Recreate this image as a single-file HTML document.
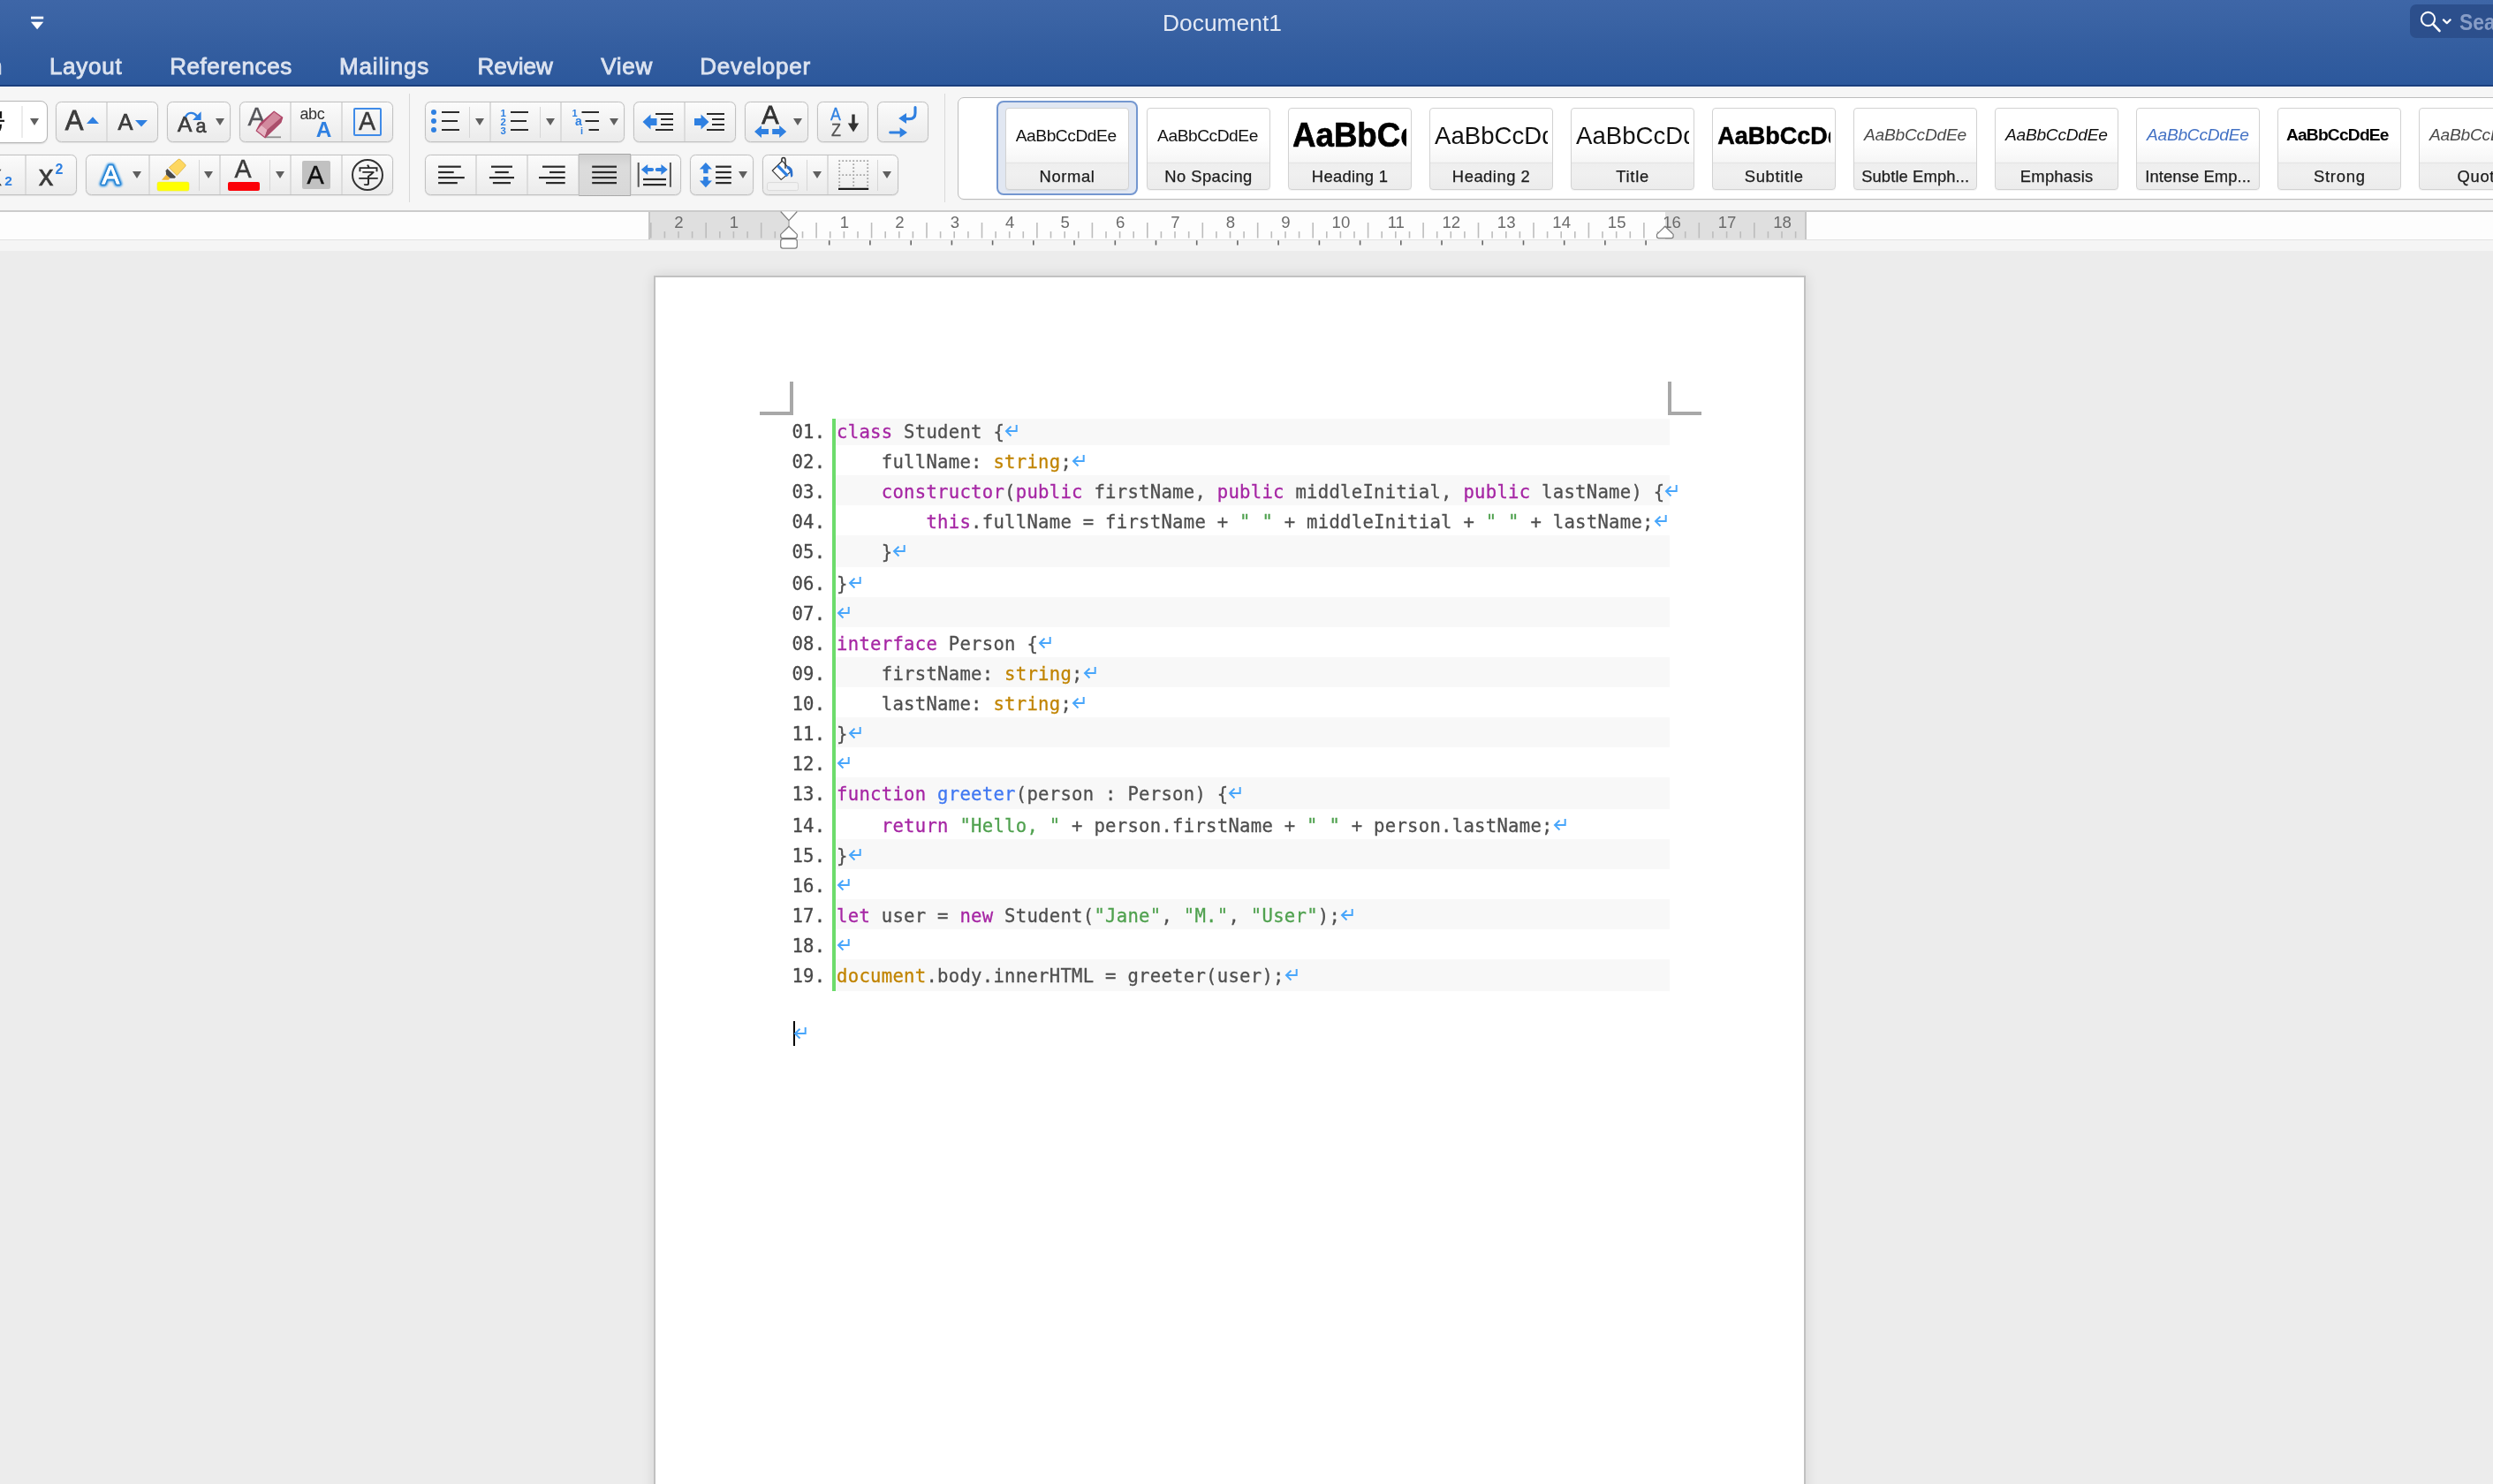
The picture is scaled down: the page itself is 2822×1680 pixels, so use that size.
<!DOCTYPE html>
<html lang="en"><head><meta charset="utf-8"><title>Document1</title>
<style>
*{box-sizing:border-box;margin:0;padding:0}
html,body{width:2822px;height:1680px;overflow:hidden}
body{position:relative;background:#ececec;font-family:"Liberation Sans",sans-serif;color:#222}
#wrap{position:absolute;left:0;top:0;width:2822px;height:1680px;overflow:hidden;will-change:transform}
.abs{position:absolute}
#titlebar{left:0;top:0;width:2822px;height:98px;background:linear-gradient(#3e66a7 0%,#3a63a4 25%,#345ea0 55%,#2c589c 100%);border-bottom:2px solid #1b3f7d}
#ribbon{left:0;top:98px;width:2822px;height:140px;background:#f6f6f6;border-top:1px solid #fff}
#ribline{left:0;top:238px;width:2822px;height:2px;background:#cbcbcb}
#rulerbg{left:0;top:240px;width:2822px;height:31px;background:#fdfdfd}
#rulerline{left:0;top:271px;width:2822px;height:1px;background:#e2e2e2}
#rulerband{left:0;top:272px;width:2822px;height:12px;background:#f5f5f5}
.tab{top:58px;font-size:26px;line-height:34px;color:#dce3f0;white-space:nowrap;-webkit-text-stroke:0.85px #dce3f0}
#doctitle{top:8.7px;left:1316px;width:135px;text-align:center;font-size:26.4px;line-height:34px;color:#e3e9f4;white-space:nowrap}
.grp{position:absolute;height:46px;border:1px solid #c2c2c2;border-radius:6.5px;background:linear-gradient(#fbfbfb,#f3f3f3 50%,#ebebeb);box-shadow:0 0 1px rgba(0,0,0,.22),0 1px 1px rgba(0,0,0,.06)}
.dv{position:absolute;top:0;width:2px;height:44px;background:#dcdcdc;margin-left:-1px}
.sv{position:absolute;top:5px;width:1px;height:35px;background:#d6d6d6}
.vsep{position:absolute;width:1px;background:#d9d9d9;top:106px;height:123px}
.ic{position:absolute;overflow:visible}
.dd{position:absolute;width:0;height:0;border-left:5.5px solid transparent;border-right:5.5px solid transparent;border-top:8px solid #5f5f5f}
</style></head><body>
<div id="wrap">
<div id="titlebar" class="abs"></div>
<svg class="ic" style="left:34px;top:17px" width="16" height="18" viewBox="0 0 16 18"><rect x="1" y="1.7" width="14.2" height="2.8" fill="#fff"/><path d="M1 7.8 H15.2 L8.1 16.2Z" fill="#fff"/></svg>
<div id="doctitle" class="abs">Document1</div>
<div class="abs tab" style="left:-80.0px;letter-spacing:0.300px">Design</div>
<div class="abs tab" style="left:55.9px;letter-spacing:0.747px">Layout</div>
<div class="abs tab" style="left:192.2px;letter-spacing:0.560px">References</div>
<div class="abs tab" style="left:384.1px;letter-spacing:0.818px">Mailings</div>
<div class="abs tab" style="left:540.4px;letter-spacing:0.010px">Review</div>
<div class="abs tab" style="left:680.2px;letter-spacing:0.704px">View</div>
<div class="abs tab" style="left:792.3px;letter-spacing:0.786px">Developer</div>
<div class="abs" style="left:2728px;top:5px;width:110px;height:38px;border-radius:7px;background:#2c4f8c"></div>
<svg class="ic" style="left:2737.4px;top:9.6px" width="44" height="30" viewBox="0 0 44 30"><circle cx="11.5" cy="11.5" r="7.6" fill="none" stroke="#fff" stroke-width="2.1"/><path d="M17 17.2 L24.5 25" stroke="#fff" stroke-width="2.6" stroke-linecap="round"/><path d="M28.9 12.4 L32.8 16.2 L36.7 12.4" fill="none" stroke="#fff" stroke-width="2.2" stroke-linecap="round" stroke-linejoin="round"/></svg>
<div class="abs" style="left:2784.4px;top:9.2px;font-size:26px;line-height:32.5px;font-weight:bold;color:#879dc7;white-space:nowrap;transform:scaleX(.88);transform-origin:0 0">Search</div>
<div id="ribbon" class="abs"></div><div id="ribline" class="abs"></div><div id="rulerbg" class="abs"></div><div id="rulerline" class="abs"></div><div id="rulerband" class="abs"></div>
<div class="abs" style="left:-10px;top:114px;width:64px;height:48px;border:1.6px solid #b6b6b6;border-radius:8px;background:#fff;box-shadow:0 1px 1.5px rgba(0,0,0,.12)"><i class="sv" style="left:32.6px;top:4.5px;width:2px;height:36px;background:#ececec"></i></div>
<i class="dd" style="left:33.5px;top:134.0px"></i>
<div class="abs" style="left:-18.6px;top:122px;font-family:'Liberation Sans','Noto Sans CJK SC',sans-serif;font-size:25px;line-height:32px;color:#111;-webkit-text-stroke:.5px #111;white-space:nowrap">号</div>
<div class="grp" style="left:63.3px;top:115px;width:115.3px;"><i class="dv" style="left:56.7px"></i></div>
<div class="grp" style="left:189.0px;top:115px;width:71.7px;"></div>
<div class="grp" style="left:271.0px;top:115px;width:174.0px;"><i class="dv" style="left:57.0px"></i><i class="dv" style="left:115.0px"></i></div>
<div class="grp" style="left:481.0px;top:115px;width:226.0px;"><i class="dv" style="left:73.0px"></i><i class="dv" style="left:153.0px"></i><i class="sv" style="left:48.6px"></i><i class="sv" style="left:128.5px"></i></div>
<div class="grp" style="left:716.7px;top:115px;width:115.9px;"><i class="dv" style="left:57.1px"></i></div>
<div class="grp" style="left:843.0px;top:115px;width:71.8px;"></div>
<div class="grp" style="left:925.0px;top:115px;width:57.8px;"></div>
<div class="grp" style="left:993.0px;top:115px;width:57.8px;"></div>
<div class="grp" style="left:-10.0px;top:175px;width:96.5px;"><i class="dv" style="left:38.0px"></i></div>
<div class="grp" style="left:97.0px;top:175px;width:348.0px;"><i class="dv" style="left:71.0px"></i><i class="dv" style="left:150.8px"></i><i class="dv" style="left:231.0px"></i><i class="dv" style="left:289.0px"></i><i class="sv" style="left:127.0px"></i><i class="sv" style="left:207.0px"></i></div>
<div class="grp" style="left:481.0px;top:175px;width:290.0px;"><i class="dv" style="left:56.6px"></i><i class="dv" style="left:114.7px"></i><i class="dv" style="left:173.0px"></i><i class="dv" style="left:231.5px"></i></div>
<div class="abs" style="left:655.4px;top:174.4px;width:58.6px;height:47.4px;background:linear-gradient(#d0d0d0,#dcdcdc 30%,#d8d8d8);border:1px solid #b4b4b4;border-top-color:#a6a6a6;border-bottom-color:#a9a9a9;border-left-color:#c4c4c4"></div>
<div class="grp" style="left:781.0px;top:175px;width:71.7px;"></div>
<div class="grp" style="left:862.8px;top:175px;width:154.0px;"><i class="dv" style="left:73.2px"></i><i class="sv" style="left:49.2px"></i><i class="sv" style="left:128.9px"></i></div>
<i class="vsep" style="left:463px"></i><i class="vsep" style="left:1068.5px"></i>
<div class="abs" style="left:73.7px;top:117.8px;font-size:31px;line-height:38.75px;height:38.75px;color:#3c3c3c;white-space:nowrap;-webkit-text-stroke:.8px #3c3c3c">A</div>
<svg class="ic" style="left:97px;top:131px" width="16" height="10"><path d="M1 9 L8 1.2 L15 9Z" fill="#2f80e1"/></svg>
<div class="abs" style="left:133.4px;top:122.6px;font-size:25.4px;line-height:31.75px;height:31.75px;color:#3c3c3c;white-space:nowrap;-webkit-text-stroke:.7px #3c3c3c">A</div>
<svg class="ic" style="left:152px;top:134.5px" width="16" height="10"><path d="M1 1 L15 1 L8 8.6Z" fill="#2f80e1"/></svg>
<div class="abs" style="left:200.9px;top:126.2px;font-size:24.5px;line-height:30.62px;height:30.62px;color:#3c3c3c;white-space:nowrap;-webkit-text-stroke:.7px #3c3c3c">A</div>
<div class="abs" style="left:221.4px;top:129.0px;font-size:21.6px;line-height:27.00px;height:27.00px;color:#3c3c3c;white-space:nowrap;-webkit-text-stroke:.6px #3c3c3c">a</div>
<svg class="ic" style="left:207.2px;top:124px" width="24" height="14" viewBox="0 0 24 14"><path d="M3 8.5 C5.5 2.8 12 2.2 16 7.5" fill="none" stroke="#2f80e1" stroke-width="2.4"/><path d="M11 12 L20.6 12 L20.6 2.2Z" fill="#2f80e1"/></svg>
<i class="dd" style="left:243.5px;top:134.0px"></i>
<div class="abs" style="left:280.4px;top:112.6px;font-size:30px;line-height:37.50px;height:37.50px;color:#55555a;white-space:nowrap;-webkit-text-stroke:.3px #55555a">A</div>
<svg class="ic" style="left:288px;top:124px" width="36" height="34" viewBox="0 0 36 34"><defs><filter id="sb"><feGaussianBlur stdDeviation=".6"/></filter></defs><rect x="12" y="30.4" width="18" height="1.8" fill="#8f8f8f" filter="url(#sb)"/><path d="M22.2 2.2 L31.7 9 L29.9 14.6 L12 31.8 L2.2 24.1 L6.4 16Z" fill="#b0486a" stroke="#b0486a" stroke-width="1.2" stroke-linejoin="round"/><path d="M22.2 3.1 L30.3 9 L14.5 23.05 L7.8 17.8Z" fill="#d28a9e"/><path d="M7.8 17.8 L14.5 23.05 L11.7 30.8 L2.9 23.75Z" fill="#e6b6c3"/><path d="M14.5 23.05 L30.3 9.4 L29.6 14.2 L12 31.1Z" fill="#a9506b"/></svg>
<div class="abs" style="left:339.4px;top:118.2px;font-size:18px;line-height:22.50px;height:22.50px;color:#333;white-space:nowrap;letter-spacing:-0.3px">abc</div>
<div class="abs" style="left:357.8px;top:132.0px;font-size:24.4px;line-height:30.50px;height:30.50px;color:#2f80e1;white-space:nowrap;font-weight:bold">A</div>
<div class="abs" style="left:400px;top:122px;width:32px;height:32px;border:2px solid #3f8be8;border-radius:2px"></div>
<div class="abs" style="left:405.9px;top:120.1px;font-size:28.6px;line-height:35.75px;height:35.75px;color:#3a3a3a;white-space:nowrap;-webkit-text-stroke:.45px #3a3a3a">A</div>
<svg class="ic" style="left:486px;top:120px" width="40" height="36" viewBox="0 0 40 36"><circle cx="5" cy="7" r="3" fill="#2f80e1"/><circle cx="5" cy="17" r="3" fill="#2f80e1"/><circle cx="5" cy="27" r="3" fill="#2f80e1"/><path d="M14 7 h20" stroke="#2b2b2b" stroke-width="2"/><path d="M14 17 h18" stroke="#2b2b2b" stroke-width="2"/><path d="M14 27 h20" stroke="#2b2b2b" stroke-width="2"/></svg>
<i class="dd" style="left:537.5px;top:134.0px"></i>
<i class="dd" style="left:617.5px;top:134.0px"></i>
<i class="dd" style="left:689.5px;top:134.0px"></i>
<svg class="ic" style="left:564px;top:120px" width="40" height="36" viewBox="0 0 40 36"><path d="M14 7 h20" stroke="#2b2b2b" stroke-width="2"/><path d="M14 17 h18" stroke="#2b2b2b" stroke-width="2"/><path d="M14 27 h20" stroke="#2b2b2b" stroke-width="2"/><text x="2.6" y="11.8" font-family="Liberation Sans,sans-serif" font-weight="bold" font-size="11.4" fill="#2f80e1">1</text><text x="2.6" y="21.8" font-family="Liberation Sans,sans-serif" font-weight="bold" font-size="11.4" fill="#2f80e1">2</text><text x="2.6" y="31.8" font-family="Liberation Sans,sans-serif" font-weight="bold" font-size="11.4" fill="#2f80e1">3</text></svg>
<svg class="ic" style="left:644px;top:120px" width="44" height="36" viewBox="0 0 44 36"><text x="3.6" y="11.9" font-family="Liberation Sans,sans-serif" font-weight="bold" font-size="11" fill="#2f80e1">1</text><text x="7" y="22" font-family="Liberation Sans,sans-serif" font-weight="bold" font-size="14" fill="#2f80e1">a</text><text x="13" y="32" font-family="Liberation Sans,sans-serif" font-weight="bold" font-size="11" fill="#2f80e1">i</text><path d="M14.5 7 h19.5 M18.5 17 h15.5 M22.5 27 h11.5" stroke="#2b2b2b" stroke-width="2"/></svg>
<svg class="ic" style="left:726px;top:124px" width="40" height="28" viewBox="0 0 40 28"><path d="M1.5 14 L10.5 5.5 L10.5 10 L17.5 10 L17.5 18 L10.5 18 L10.5 22.5Z" fill="#2f80e1"/><path d="M16 5 h20 M22 11 h14 M22 17 h14 M16 23 h20" stroke="#2b2b2b" stroke-width="2"/></svg>
<svg class="ic" style="left:784px;top:124px" width="40" height="28" viewBox="0 0 40 28"><path d="M18.5 14 L9.5 5.5 L9.5 10 L2 10 L2 18 L9.5 18 L9.5 22.5Z" fill="#2f80e1"/><path d="M16 5 h20 M22 11 h14 M22 17 h14 M16 23 h20" stroke="#2b2b2b" stroke-width="2"/></svg>
<div class="abs" style="left:862.2px;top:112.2px;font-size:29px;line-height:36.25px;height:36.25px;color:#333;white-space:nowrap;-webkit-text-stroke:.8px #333">A</div>
<svg class="ic" style="left:853px;top:141px" width="40" height="16" viewBox="0 0 40 16"><path d="M1 8 L9 1 L9 5 L17 5 L17 11 L9 11 L9 15Z M37.2 8 L29.2 1 L29.2 5 L21.2 5 L21.2 11 L29.2 11 L29.2 15Z" fill="#2f80e1"/></svg>
<i class="dd" style="left:897.5px;top:134.0px"></i>
<div class="abs" style="left:940.0px;top:117.0px;font-size:19.7px;line-height:24.62px;height:24.62px;color:#2f80e1;white-space:nowrap;transform:scaleX(.9);transform-origin:0 0;-webkit-text-stroke:.3px #2f80e1">A</div>
<div class="abs" style="left:940.8px;top:134.9px;font-size:19.5px;line-height:24.38px;height:24.38px;color:#555;white-space:nowrap;transform:scaleX(.92);transform-origin:0 0;-webkit-text-stroke:.3px #555">Z</div>
<svg class="ic" style="left:958px;top:128px" width="16" height="24" viewBox="0 0 16 24"><path d="M8 1.5 V13" stroke="#333" stroke-width="3.4"/><path d="M1.8 11.5 L14.2 11.5 L8 21.5Z" fill="#333"/></svg>
<svg class="ic" style="left:1004px;top:119px" width="36" height="40" viewBox="0 0 36 40"><path d="M32 2.6 V9 Q32 15.6 25.4 15.6 H19" fill="none" stroke="#2f80e1" stroke-width="3.1" stroke-linecap="round"/><path d="M13.2 15 L22 9 L22 21Z" fill="#2f80e1"/><path d="M3.6 31 H16" stroke="#2f80e1" stroke-width="2.8" stroke-linecap="round"/><path d="M23 31 L14.6 25.2 L14.6 36.8Z" fill="#2f80e1"/></svg>
<div class="abs" style="left:-15.0px;top:177.6px;font-size:33.5px;line-height:41.88px;height:41.88px;color:#3a3a3a;white-space:nowrap;-webkit-text-stroke:.5px #3a3a3a">x</div>
<div class="abs" style="left:5.2px;top:194.5px;font-size:15.5px;line-height:19.38px;height:19.38px;color:#2f80e1;white-space:nowrap;font-weight:bold">2</div>
<div class="abs" style="left:43.8px;top:177.6px;font-size:33.5px;line-height:41.88px;height:41.88px;color:#3a3a3a;white-space:nowrap;-webkit-text-stroke:.5px #3a3a3a">x</div>
<div class="abs" style="left:62.6px;top:182.1px;font-size:16px;line-height:20.00px;height:20.00px;color:#2f80e1;white-space:nowrap;font-weight:bold">2</div>
<svg class="ic" style="left:108px;top:180px" width="36" height="36" viewBox="0 0 36 36"><defs><filter id="gl" x="-30%" y="-30%" width="160%" height="160%"><feGaussianBlur stdDeviation="1.1"/></filter></defs><text x="7.4" y="28.3" font-family="Liberation Sans,sans-serif" font-size="29.5" fill="none" stroke="#3a98e6" stroke-width="6.5" stroke-linejoin="round" filter="url(#gl)">A</text><text x="7.4" y="28.3" font-family="Liberation Sans,sans-serif" font-size="29.5" fill="#fff" stroke="#2a86d4" stroke-width="4.4" stroke-linejoin="round" paint-order="stroke">A</text><text x="7.4" y="28.3" font-family="Liberation Sans,sans-serif" font-size="29.5" fill="#fff" stroke="#fff" stroke-width="0.9">A</text></svg>
<i class="dd" style="left:149.5px;top:194.0px"></i>
<svg class="ic" style="left:176px;top:178px" width="40" height="40" viewBox="0 0 40 40"><rect x="2" y="28.1" width="36" height="10" rx="2" fill="#ffff00" stroke="#ecec3a" stroke-width=".6"/><path d="M12.1 19.7 L16.6 23.8 L14.6 25.8 L6.9 25.8Z" fill="#f2b93c"/><path d="M13.4 12.9 L23 22.2 L21.7 23.8 L16.6 23.8 L12.1 19.7 L11.7 15.2Z" fill="#4a4a4a"/><path d="M25.6 2.6 Q26.8 1.6 28 2.7 L33.6 8 Q34.7 9.2 33.7 10.4 L24.3 20.6 L15.3 11.7Z" fill="#fdd761" stroke="#d9a92e" stroke-width=".7"/></svg>
<i class="dd" style="left:231.4px;top:194.0px"></i>
<div class="abs" style="left:265.6px;top:174.0px;font-size:28.6px;line-height:35.75px;height:35.75px;color:#3a3a3a;white-space:nowrap;-webkit-text-stroke:.45px #3a3a3a">A</div>
<div class="abs" style="left:258px;top:206px;width:36px;height:10px;border-radius:2px;background:#fb0007"></div>
<i class="dd" style="left:311.5px;top:194.0px"></i>
<div class="abs" style="left:342px;top:182px;width:32px;height:32px;border-radius:2px;background:#c1c1c1"></div>
<div class="abs" style="left:347.6px;top:179.7px;font-size:28.8px;line-height:36.00px;height:36.00px;color:#111;white-space:nowrap;-webkit-text-stroke:.45px #111">A</div>
<div class="abs" style="left:398px;top:180px;width:36px;height:36px;border-radius:50%;border:2px solid #333"></div>
<div class="abs" style="left:404.5px;top:183px;width:25px;height:32px;font-family:'Liberation Sans','Noto Sans CJK SC',sans-serif;font-size:25px;line-height:32px;color:#2a2a2a;text-align:center">字</div>
<svg class="ic" style="left:0;top:0" width="1100" height="240" viewBox="0 0 1100 240"><path d="M496.1 188.7 H521.8" stroke="#2b2b2b" stroke-width="2.2"/><path d="M496.1 195.0 H513.7" stroke="#2b2b2b" stroke-width="2.2"/><path d="M496.1 201.1 H525.8" stroke="#2b2b2b" stroke-width="2.2"/><path d="M496.1 207.1 H517.8" stroke="#2b2b2b" stroke-width="2.2"/><path d="M556.0 188.7 H580.0" stroke="#2b2b2b" stroke-width="2.2"/><path d="M560.3 195.0 H575.8" stroke="#2b2b2b" stroke-width="2.2"/><path d="M553.9 201.1 H582.0" stroke="#2b2b2b" stroke-width="2.2"/><path d="M557.9 207.1 H578.0" stroke="#2b2b2b" stroke-width="2.2"/><path d="M614.0 188.7 H639.7" stroke="#2b2b2b" stroke-width="2.2"/><path d="M622.0 195.0 H639.7" stroke="#2b2b2b" stroke-width="2.2"/><path d="M610.0 201.1 H639.7" stroke="#2b2b2b" stroke-width="2.2"/><path d="M618.0 207.1 H639.7" stroke="#2b2b2b" stroke-width="2.2"/><path d="M670.2 188.7 H698.0" stroke="#2b2b2b" stroke-width="2.2"/><path d="M670.2 195.0 H698.0" stroke="#2b2b2b" stroke-width="2.2"/><path d="M670.2 201.1 H698.0" stroke="#2b2b2b" stroke-width="2.2"/><path d="M670.2 207.1 H698.0" stroke="#2b2b2b" stroke-width="2.2"/><path d="M722.7 183.9 V211.8 M758.9 183.9 V211.8" stroke="#555" stroke-width="2"/><path d="M728.0 203.0 H754.0" stroke="#2b2b2b" stroke-width="2.2"/><path d="M728.0 209.1 H754.0" stroke="#2b2b2b" stroke-width="2.2"/><path d="M725.8 192 L733.2 186 L733.2 189.9 L738 189.9 A2.1 2.1 0 0 1 738 194.1 L733.2 194.1 L733.2 198Z M755.8 192 L748.4 186 L748.4 189.9 L743.8 189.9 A2.1 2.1 0 0 0 743.8 194.1 L748.4 194.1 L748.4 198Z" fill="#2f80e1"/><path d="M798.9 183.9 L806 191.6 L801.6 191.6 L801.6 196.3 L796.2 196.3 L796.2 191.6 L791.8 191.6Z M798.9 212.3 L806 204.6 L801.6 204.6 L801.6 199.9 L796.2 199.9 L796.2 204.6 L791.8 204.6Z" fill="#2f80e1"/><path d="M810.1 188.7 H827.8" stroke="#2b2b2b" stroke-width="2.2"/><path d="M810.1 195.0 H827.8" stroke="#2b2b2b" stroke-width="2.2"/><path d="M810.1 201.1 H827.8" stroke="#2b2b2b" stroke-width="2.2"/><path d="M810.1 207.1 H827.8" stroke="#2b2b2b" stroke-width="2.2"/><rect x="868.5" y="206.6" width="35" height="9" rx="2" fill="#f1f1f1" stroke="#dadada" stroke-width="1"/><path d="M885.4 182.2 L896 193.6 L884.2 203.4 L874.2 193.2Z" fill="#fff" stroke="#333" stroke-width="1.2" stroke-linejoin="round"/><path d="M881.6 186.4 L892.8 198 L890.4 200.2 L879.2 188.8Z" fill="#2f80e1"/><path d="M890.6 187.6 Q898 188.4 897.4 198.6 Q897 201.2 895.2 200.4 Q894.6 193 890.6 190.6Z" fill="#2a6fcb"/><path d="M889 190.8 V181.2 Q889 178.6 886.9 178.6 Q884.8 178.6 884.8 181.2 V182.6" fill="none" stroke="#333" stroke-width="1.5"/><path d="M949.3 181.2 h1.8v1.8h-1.8zM949.3 197.2 h1.8v1.8h-1.8zM953.3 181.2 h1.8v1.8h-1.8zM953.3 197.2 h1.8v1.8h-1.8zM957.3 181.2 h1.8v1.8h-1.8zM957.3 197.2 h1.8v1.8h-1.8zM961.3 181.2 h1.8v1.8h-1.8zM961.3 197.2 h1.8v1.8h-1.8zM965.3 181.2 h1.8v1.8h-1.8zM965.3 197.2 h1.8v1.8h-1.8zM969.3 181.2 h1.8v1.8h-1.8zM969.3 197.2 h1.8v1.8h-1.8zM973.3 181.2 h1.8v1.8h-1.8zM973.3 197.2 h1.8v1.8h-1.8zM977.3 181.2 h1.8v1.8h-1.8zM977.3 197.2 h1.8v1.8h-1.8zM981.3 181.2 h1.8v1.8h-1.8zM981.3 197.2 h1.8v1.8h-1.8zM949.3 181.2 h1.8v1.8h-1.8zM965.3 181.2 h1.8v1.8h-1.8zM981.3 181.2 h1.8v1.8h-1.8zM949.3 185.2 h1.8v1.8h-1.8zM965.3 185.2 h1.8v1.8h-1.8zM981.3 185.2 h1.8v1.8h-1.8zM949.3 189.2 h1.8v1.8h-1.8zM965.3 189.2 h1.8v1.8h-1.8zM981.3 189.2 h1.8v1.8h-1.8zM949.3 193.2 h1.8v1.8h-1.8zM965.3 193.2 h1.8v1.8h-1.8zM981.3 193.2 h1.8v1.8h-1.8zM949.3 197.2 h1.8v1.8h-1.8zM965.3 197.2 h1.8v1.8h-1.8zM981.3 197.2 h1.8v1.8h-1.8zM949.3 201.2 h1.8v1.8h-1.8zM965.3 201.2 h1.8v1.8h-1.8zM981.3 201.2 h1.8v1.8h-1.8zM949.3 205.2 h1.8v1.8h-1.8zM965.3 205.2 h1.8v1.8h-1.8zM981.3 205.2 h1.8v1.8h-1.8zM949.3 209.2 h1.8v1.8h-1.8zM965.3 209.2 h1.8v1.8h-1.8zM981.3 209.2 h1.8v1.8h-1.8z" fill="#a4a4a4"/><path d="M949 213.9 H983.2" stroke="#1a1a1a" stroke-width="2.3"/></svg>
<i class="dd" style="left:835.5px;top:193.8px"></i>
<i class="dd" style="left:919.8px;top:193.8px"></i>
<i class="dd" style="left:999.2px;top:193.8px"></i>
<style>
.card{position:absolute;top:122px;width:140px;height:93px;border:1px solid #d2d2d2;border-radius:4px;background:linear-gradient(#fff 0,#fff 40%,#f6f6f6 66%,#eeeeee 67%,#f0f0f0 80%,#ececec 100%);overflow:hidden;box-shadow:0 1px 1px rgba(0,0,0,.05)}
.card .pv{position:absolute;left:5px;top:0;width:127.6px;height:61px;white-space:nowrap;overflow:hidden;color:#111}
.card .pv span{position:absolute;display:inline-block;transform-origin:0 0;white-space:nowrap}
.card .lb{position:absolute;left:0;top:64.9px;width:100%;height:24px;line-height:24px;font-size:18.4px;text-align:center;color:#1c1c1c;-webkit-text-stroke:.25px #1c1c1c;white-space:nowrap}
.card .ln{position:absolute;left:0;top:61px;width:100%;height:1px;background:#e4e4e4}
</style>
<div class="abs" style="left:1084px;top:110px;width:1760px;height:116px;border:1px solid #bdbdbd;border-radius:7px;background:#fff;box-shadow:0 1px 0 rgba(0,0,0,.04)"></div>
<div class="abs" style="left:1128.4px;top:114.4px;width:159.5px;height:107px;border:2px solid #7497d0;border-radius:8px;background:#e1e7f2"></div>
<div class="card" style="left:1138.0px"><div class="pv"><span style="left:5.7px;top:18.5px;font-size:19.2px;line-height:24.00px;font-weight:normal;font-style:normal;color:#111;letter-spacing:-0.441px;transform:scaleX(1)">AaBbCcDdEe</span></div><i class="ln"></i><div class="lb" style="letter-spacing:0.600px">Normal</div></div>
<div class="card" style="left:1298.0px"><div class="pv"><span style="left:6.1px;top:18.5px;font-size:19.2px;line-height:24.00px;font-weight:normal;font-style:normal;color:#111;letter-spacing:-0.463px;transform:scaleX(1)">AaBbCcDdEe</span></div><i class="ln"></i><div class="lb" style="letter-spacing:0.452px">No Spacing</div></div>
<div class="card" style="left:1458.1px"><div class="pv"><span style="left:-0.8px;top:7.3px;font-size:38px;line-height:47.50px;font-weight:bold;font-style:normal;color:#000;-webkit-text-stroke:.7px #000;transform:scaleX(0.965)">AaBbCcDd</span></div><i class="ln"></i><div class="lb" style="letter-spacing:0.289px">Heading 1</div></div>
<div class="card" style="left:1618.1px"><div class="pv"><span style="left:-0.1px;top:13.7px;font-size:27.6px;line-height:34.50px;font-weight:normal;font-style:normal;color:#111;transform:scaleX(1)">AaBbCcDd</span></div><i class="ln"></i><div class="lb" style="letter-spacing:0.514px">Heading 2</div></div>
<div class="card" style="left:1778.1px"><div class="pv"><span style="left:-0.1px;top:13.7px;font-size:27.6px;line-height:34.50px;font-weight:normal;font-style:normal;color:#111;transform:scaleX(1)">AaBbCcDd</span></div><i class="ln"></i><div class="lb" style="letter-spacing:0.730px">Title</div></div>
<div class="card" style="left:1938.2px"><div class="pv"><span style="left:0.0px;top:14.9px;font-size:27px;line-height:33.75px;font-weight:bold;font-style:normal;color:#000;-webkit-text-stroke:.5px #000;transform:scaleX(1.0)">AaBbCcDd</span></div><i class="ln"></i><div class="lb" style="letter-spacing:0.718px">Subtitle</div></div>
<div class="card" style="left:2098.2px"><div class="pv"><span style="left:5.7px;top:18.2px;font-size:19.2px;line-height:24.00px;font-weight:normal;font-style:italic;color:#4a4a4a;letter-spacing:-0.219px;transform:scaleX(1)">AaBbCcDdEe</span></div><i class="ln"></i><div class="lb" style="letter-spacing:0.101px">Subtle Emph...</div></div>
<div class="card" style="left:2258.2px"><div class="pv"><span style="left:5.9px;top:18.2px;font-size:19.2px;line-height:24.00px;font-weight:normal;font-style:italic;color:#111;letter-spacing:-0.296px;transform:scaleX(1)">AaBbCcDdEe</span></div><i class="ln"></i><div class="lb" style="letter-spacing:0.244px">Emphasis</div></div>
<div class="card" style="left:2418.2px"><div class="pv"><span style="left:5.8px;top:18.2px;font-size:19.2px;line-height:24.00px;font-weight:normal;font-style:italic;color:#4472c4;letter-spacing:-0.274px;transform:scaleX(1)">AaBbCcDdEe</span></div><i class="ln"></i><div class="lb" style="letter-spacing:0.082px">Intense Emp...</div></div>
<div class="card" style="left:2578.3px"><div class="pv"><span style="left:3.6px;top:18.2px;font-size:19.2px;line-height:24.00px;font-weight:bold;font-style:normal;color:#000;letter-spacing:-0.785px;transform:scaleX(1)">AaBbCcDdEe</span></div><i class="ln"></i><div class="lb" style="letter-spacing:0.757px">Strong</div></div>
<div class="card" style="left:2738.3px"><div class="pv"><span style="left:5.6px;top:18.2px;font-size:19.2px;line-height:24.00px;font-weight:normal;font-style:italic;color:#4a4a4a;letter-spacing:-0.219px;transform:scaleX(1)">AaBbCcDdEe</span></div><i class="ln"></i><div class="lb" style="letter-spacing:0.719px">Quote</div></div>
<div class="abs" style="left:734px;top:240px;width:158.9px;height:31px;background:#dfdfdf;border-left:2px solid #c6c6c6"></div>
<div class="abs" style="left:1884.7px;top:240px;width:160.8px;height:31px;background:#dfdfdf;border-right:2px solid #c6c6c6"></div>
<svg class="ic" style="left:0;top:238px" width="2822" height="48" viewBox="0 238 2822 48"><path d="M736.8 252 V269.6 M752.4 262 V269.6 M768.0 262 V269.6 M783.6 262 V269.6 M799.2 252 V269.6 M814.8 262 V269.6 M830.4 262 V269.6 M846.1 262 V269.6 M861.7 252 V269.6 M877.3 262 V269.6 M892.9 262 V269.6 M908.5 262 V269.6 M924.1 252 V269.6 M939.7 262 V269.6 M955.4 262 V269.6 M971.0 262 V269.6 M986.6 252 V269.6 M1002.2 262 V269.6 M1017.8 262 V269.6 M1033.4 262 V269.6 M1049.0 252 V269.6 M1064.6 262 V269.6 M1080.2 262 V269.6 M1095.9 262 V269.6 M1111.5 252 V269.6 M1127.1 262 V269.6 M1142.7 262 V269.6 M1158.3 262 V269.6 M1173.9 252 V269.6 M1189.5 262 V269.6 M1205.2 262 V269.6 M1220.8 262 V269.6 M1236.4 252 V269.6 M1252.0 262 V269.6 M1267.6 262 V269.6 M1283.2 262 V269.6 M1298.8 252 V269.6 M1314.4 262 V269.6 M1330.0 262 V269.6 M1345.7 262 V269.6 M1361.3 252 V269.6 M1376.9 262 V269.6 M1392.5 262 V269.6 M1408.1 262 V269.6 M1423.7 252 V269.6 M1439.3 262 V269.6 M1455.0 262 V269.6 M1470.6 262 V269.6 M1486.2 252 V269.6 M1501.8 262 V269.6 M1517.4 262 V269.6 M1533.0 262 V269.6 M1548.6 252 V269.6 M1564.2 262 V269.6 M1579.8 262 V269.6 M1595.5 262 V269.6 M1611.1 252 V269.6 M1626.7 262 V269.6 M1642.3 262 V269.6 M1657.9 262 V269.6 M1673.5 252 V269.6 M1689.1 262 V269.6 M1704.8 262 V269.6 M1720.4 262 V269.6 M1736.0 252 V269.6 M1751.6 262 V269.6 M1767.2 262 V269.6 M1782.8 262 V269.6 M1798.4 252 V269.6 M1814.0 262 V269.6 M1829.7 262 V269.6 M1845.3 262 V269.6 M1860.9 252 V269.6 M1876.5 262 V269.6 M1892.1 262 V269.6 M1907.7 262 V269.6 M1923.3 252 V269.6 M1938.9 262 V269.6 M1954.6 262 V269.6 M1970.2 262 V269.6 M1985.8 252 V269.6 M2001.4 262 V269.6 M2017.0 262 V269.6 M2032.6 262 V269.6 " stroke="#bdbdbd" stroke-width="1.6" fill="none"/><path d="M938.7 272.2 V277.6 M984.9 272.2 V277.6 M1031.2 272.2 V277.6 M1077.4 272.2 V277.6 M1123.6 272.2 V277.6 M1169.8 272.2 V277.6 M1216.0 272.2 V277.6 M1262.3 272.2 V277.6 M1308.5 272.2 V277.6 M1354.7 272.2 V277.6 M1400.9 272.2 V277.6 M1447.1 272.2 V277.6 M1493.4 272.2 V277.6 M1539.6 272.2 V277.6 M1585.8 272.2 V277.6 M1632.0 272.2 V277.6 M1678.2 272.2 V277.6 M1724.5 272.2 V277.6 M1770.7 272.2 V277.6 M1816.9 272.2 V277.6 M1863.1 272.2 V277.6 " stroke="#666" stroke-width="1.6" fill="none"/><text x="768.5" y="257.8" text-anchor="middle" font-family="Liberation Sans,sans-serif" font-size="18.6" fill="#6a6a6a">2</text><text x="830.9" y="257.8" text-anchor="middle" font-family="Liberation Sans,sans-serif" font-size="18.6" fill="#6a6a6a">1</text><text x="955.9" y="257.8" text-anchor="middle" font-family="Liberation Sans,sans-serif" font-size="18.6" fill="#6a6a6a">1</text><text x="1018.3" y="257.8" text-anchor="middle" font-family="Liberation Sans,sans-serif" font-size="18.6" fill="#6a6a6a">2</text><text x="1080.8" y="257.8" text-anchor="middle" font-family="Liberation Sans,sans-serif" font-size="18.6" fill="#6a6a6a">3</text><text x="1143.2" y="257.8" text-anchor="middle" font-family="Liberation Sans,sans-serif" font-size="18.6" fill="#6a6a6a">4</text><text x="1205.7" y="257.8" text-anchor="middle" font-family="Liberation Sans,sans-serif" font-size="18.6" fill="#6a6a6a">5</text><text x="1268.1" y="257.8" text-anchor="middle" font-family="Liberation Sans,sans-serif" font-size="18.6" fill="#6a6a6a">6</text><text x="1330.5" y="257.8" text-anchor="middle" font-family="Liberation Sans,sans-serif" font-size="18.6" fill="#6a6a6a">7</text><text x="1393.0" y="257.8" text-anchor="middle" font-family="Liberation Sans,sans-serif" font-size="18.6" fill="#6a6a6a">8</text><text x="1455.5" y="257.8" text-anchor="middle" font-family="Liberation Sans,sans-serif" font-size="18.6" fill="#6a6a6a">9</text><text x="1517.9" y="257.8" text-anchor="middle" font-family="Liberation Sans,sans-serif" font-size="18.6" fill="#6a6a6a">10</text><text x="1580.3" y="257.8" text-anchor="middle" font-family="Liberation Sans,sans-serif" font-size="18.6" fill="#6a6a6a">11</text><text x="1642.8" y="257.8" text-anchor="middle" font-family="Liberation Sans,sans-serif" font-size="18.6" fill="#6a6a6a">12</text><text x="1705.2" y="257.8" text-anchor="middle" font-family="Liberation Sans,sans-serif" font-size="18.6" fill="#6a6a6a">13</text><text x="1767.7" y="257.8" text-anchor="middle" font-family="Liberation Sans,sans-serif" font-size="18.6" fill="#6a6a6a">14</text><text x="1830.2" y="257.8" text-anchor="middle" font-family="Liberation Sans,sans-serif" font-size="18.6" fill="#6a6a6a">15</text><text x="1892.6" y="257.8" text-anchor="middle" font-family="Liberation Sans,sans-serif" font-size="18.6" fill="#6a6a6a">16</text><text x="1955.1" y="257.8" text-anchor="middle" font-family="Liberation Sans,sans-serif" font-size="18.6" fill="#6a6a6a">17</text><text x="2017.5" y="257.8" text-anchor="middle" font-family="Liberation Sans,sans-serif" font-size="18.6" fill="#6a6a6a">18</text><path d="M883.7 239.5 L893 249.6 L902.3 239.5" fill="#fff" stroke="#7d7d7d" stroke-width="1.2"/><path d="M893 250 V256" stroke="#aaa" stroke-width="1.4"/><path d="M893 256.2 L902.3 265.4 V267.6 Q902.3 269.6 900.3 269.6 H885.7 Q883.7 269.6 883.7 267.6 V265.4Z" fill="#fff" stroke="#7d7d7d" stroke-width="1.2" stroke-linejoin="round"/><rect x="883.7" y="270.6" width="18.6" height="10.6" rx="2.6" fill="#fff" stroke="#7d7d7d" stroke-width="1.2"/><path d="M1884.8 256.2 L1894.1 265.4 V267.6 Q1894.1 269.6 1892.1 269.6 H1877.5 Q1875.5 269.6 1875.5 267.6 V265.4Z" fill="#fff" stroke="#7d7d7d" stroke-width="1.2" stroke-linejoin="round"/></svg>
<style>
#page{left:740px;top:312px;width:1304px;height:1400px;background:#fff;border:2px solid #c1c1c1;box-shadow:0 0 14px rgba(0,0,0,.11)}
.row{position:absolute;left:946px;width:944px}
.sh{background:#f8f8f8}
.cl,.ln{position:absolute;font-family:"DejaVu Sans Mono","Liberation Mono",monospace;font-size:20.6px;line-height:34px;height:34px;letter-spacing:.268px;white-space:pre;color:#4f4f4f;-webkit-text-stroke:.3px}
.ln{left:896.4px;color:#474747}
.cl{left:947.1px}
.p{color:#a626a4}.a{color:#c18401}.g{color:#50a14f}.b{color:#4078f2}
.ret{display:inline-block;vertical-align:baseline;overflow:visible;margin-left:0}
.crn{position:absolute;background:#a8a8a8}
</style>
<div id="page" class="abs"></div>
<i class="crn" style="left:894px;top:432px;width:4px;height:38px"></i><i class="crn" style="left:860px;top:466px;width:38px;height:4px"></i>
<i class="crn" style="left:1888px;top:432px;width:4px;height:38px"></i><i class="crn" style="left:1888px;top:466px;width:38px;height:4px"></i>
<div class="row sh" style="top:474px;height:30px"></div>
<div class="row sh" style="top:538px;height:34px"></div>
<div class="row sh" style="top:606px;height:36px"></div>
<div class="row sh" style="top:676px;height:34px"></div>
<div class="row sh" style="top:744px;height:34px"></div>
<div class="row sh" style="top:812px;height:34px"></div>
<div class="row sh" style="top:880px;height:36px"></div>
<div class="row sh" style="top:950px;height:34px"></div>
<div class="row sh" style="top:1018px;height:34px"></div>
<div class="row sh" style="top:1086px;height:36px"></div>
<div class="abs" style="left:942px;top:474px;width:4px;height:648px;background:#6ddc6c"></div>
<div class="ln" style="top:472.00px">01.</div><div class="cl" style="top:472.00px"><span class="p">class</span> Student {<svg class="ret" width="15" height="16" viewBox="0 -16 15 16"><path d="M13.7 -14.9 V-7.9 H2 M7.5 -13.3 L2 -7.9 L7.5 -2.5" fill="none" stroke="#48a6fb" stroke-width="2"/></svg></div>
<div class="ln" style="top:506.00px">02.</div><div class="cl" style="top:506.00px">    fullName: <span class="a">string</span>;<svg class="ret" width="15" height="16" viewBox="0 -16 15 16"><path d="M13.7 -14.9 V-7.9 H2 M7.5 -13.3 L2 -7.9 L7.5 -2.5" fill="none" stroke="#48a6fb" stroke-width="2"/></svg></div>
<div class="ln" style="top:540.00px">03.</div><div class="cl" style="top:540.00px">    <span class="p">constructor</span>(<span class="p">public</span> firstName, <span class="p">public</span> middleInitial, <span class="p">public</span> lastName) {<svg class="ret" width="15" height="16" viewBox="0 -16 15 16"><path d="M13.7 -14.9 V-7.9 H2 M7.5 -13.3 L2 -7.9 L7.5 -2.5" fill="none" stroke="#48a6fb" stroke-width="2"/></svg></div>
<div class="ln" style="top:574.00px">04.</div><div class="cl" style="top:574.00px">        <span class="p">this</span>.fullName = firstName + <span class="g">" "</span> + middleInitial + <span class="g">" "</span> + lastName;<svg class="ret" width="15" height="16" viewBox="0 -16 15 16"><path d="M13.7 -14.9 V-7.9 H2 M7.5 -13.3 L2 -7.9 L7.5 -2.5" fill="none" stroke="#48a6fb" stroke-width="2"/></svg></div>
<div class="ln" style="top:608.00px">05.</div><div class="cl" style="top:608.00px">    }<svg class="ret" width="15" height="16" viewBox="0 -16 15 16"><path d="M13.7 -14.9 V-7.9 H2 M7.5 -13.3 L2 -7.9 L7.5 -2.5" fill="none" stroke="#48a6fb" stroke-width="2"/></svg></div>
<div class="ln" style="top:644.00px">06.</div><div class="cl" style="top:644.00px">}<svg class="ret" width="15" height="16" viewBox="0 -16 15 16"><path d="M13.7 -14.9 V-7.9 H2 M7.5 -13.3 L2 -7.9 L7.5 -2.5" fill="none" stroke="#48a6fb" stroke-width="2"/></svg></div>
<div class="ln" style="top:678.00px">07.</div><div class="cl" style="top:678.00px"><svg class="ret" width="15" height="16" viewBox="0 -16 15 16"><path d="M13.7 -14.9 V-7.9 H2 M7.5 -13.3 L2 -7.9 L7.5 -2.5" fill="none" stroke="#48a6fb" stroke-width="2"/></svg></div>
<div class="ln" style="top:712.00px">08.</div><div class="cl" style="top:712.00px"><span class="p">interface</span> Person {<svg class="ret" width="15" height="16" viewBox="0 -16 15 16"><path d="M13.7 -14.9 V-7.9 H2 M7.5 -13.3 L2 -7.9 L7.5 -2.5" fill="none" stroke="#48a6fb" stroke-width="2"/></svg></div>
<div class="ln" style="top:746.00px">09.</div><div class="cl" style="top:746.00px">    firstName: <span class="a">string</span>;<svg class="ret" width="15" height="16" viewBox="0 -16 15 16"><path d="M13.7 -14.9 V-7.9 H2 M7.5 -13.3 L2 -7.9 L7.5 -2.5" fill="none" stroke="#48a6fb" stroke-width="2"/></svg></div>
<div class="ln" style="top:780.00px">10.</div><div class="cl" style="top:780.00px">    lastName: <span class="a">string</span>;<svg class="ret" width="15" height="16" viewBox="0 -16 15 16"><path d="M13.7 -14.9 V-7.9 H2 M7.5 -13.3 L2 -7.9 L7.5 -2.5" fill="none" stroke="#48a6fb" stroke-width="2"/></svg></div>
<div class="ln" style="top:814.00px">11.</div><div class="cl" style="top:814.00px">}<svg class="ret" width="15" height="16" viewBox="0 -16 15 16"><path d="M13.7 -14.9 V-7.9 H2 M7.5 -13.3 L2 -7.9 L7.5 -2.5" fill="none" stroke="#48a6fb" stroke-width="2"/></svg></div>
<div class="ln" style="top:848.00px">12.</div><div class="cl" style="top:848.00px"><svg class="ret" width="15" height="16" viewBox="0 -16 15 16"><path d="M13.7 -14.9 V-7.9 H2 M7.5 -13.3 L2 -7.9 L7.5 -2.5" fill="none" stroke="#48a6fb" stroke-width="2"/></svg></div>
<div class="ln" style="top:882.00px">13.</div><div class="cl" style="top:882.00px"><span class="p">function</span> <span class="b">greeter</span>(person : Person) {<svg class="ret" width="15" height="16" viewBox="0 -16 15 16"><path d="M13.7 -14.9 V-7.9 H2 M7.5 -13.3 L2 -7.9 L7.5 -2.5" fill="none" stroke="#48a6fb" stroke-width="2"/></svg></div>
<div class="ln" style="top:918.00px">14.</div><div class="cl" style="top:918.00px">    <span class="p">return</span> <span class="g">"Hello, "</span> + person.firstName + <span class="g">" "</span> + person.lastName;<svg class="ret" width="15" height="16" viewBox="0 -16 15 16"><path d="M13.7 -14.9 V-7.9 H2 M7.5 -13.3 L2 -7.9 L7.5 -2.5" fill="none" stroke="#48a6fb" stroke-width="2"/></svg></div>
<div class="ln" style="top:952.00px">15.</div><div class="cl" style="top:952.00px">}<svg class="ret" width="15" height="16" viewBox="0 -16 15 16"><path d="M13.7 -14.9 V-7.9 H2 M7.5 -13.3 L2 -7.9 L7.5 -2.5" fill="none" stroke="#48a6fb" stroke-width="2"/></svg></div>
<div class="ln" style="top:986.00px">16.</div><div class="cl" style="top:986.00px"><svg class="ret" width="15" height="16" viewBox="0 -16 15 16"><path d="M13.7 -14.9 V-7.9 H2 M7.5 -13.3 L2 -7.9 L7.5 -2.5" fill="none" stroke="#48a6fb" stroke-width="2"/></svg></div>
<div class="ln" style="top:1020.00px">17.</div><div class="cl" style="top:1020.00px"><span class="p">let</span> user = <span class="p">new</span> Student(<span class="g">"Jane"</span>, <span class="g">"M."</span>, <span class="g">"User"</span>);<svg class="ret" width="15" height="16" viewBox="0 -16 15 16"><path d="M13.7 -14.9 V-7.9 H2 M7.5 -13.3 L2 -7.9 L7.5 -2.5" fill="none" stroke="#48a6fb" stroke-width="2"/></svg></div>
<div class="ln" style="top:1054.00px">18.</div><div class="cl" style="top:1054.00px"><svg class="ret" width="15" height="16" viewBox="0 -16 15 16"><path d="M13.7 -14.9 V-7.9 H2 M7.5 -13.3 L2 -7.9 L7.5 -2.5" fill="none" stroke="#48a6fb" stroke-width="2"/></svg></div>
<div class="ln" style="top:1088.00px">19.</div><div class="cl" style="top:1088.00px"><span class="a">document</span>.body.innerHTML = greeter(user);<svg class="ret" width="15" height="16" viewBox="0 -16 15 16"><path d="M13.7 -14.9 V-7.9 H2 M7.5 -13.3 L2 -7.9 L7.5 -2.5" fill="none" stroke="#48a6fb" stroke-width="2"/></svg></div>
<div class="abs" style="left:898px;top:1156px;width:2px;height:28px;background:#000"></div>
<div class="abs" style="left:897.6px;top:1161.8px;height:16px;line-height:0"><svg class="ret" width="15" height="16" viewBox="0 -16 15 16"><path d="M13.7 -14.9 V-7.9 H2 M7.5 -13.3 L2 -7.9 L7.5 -2.5" fill="none" stroke="#48a6fb" stroke-width="2"/></svg></div></div>
</body></html>
